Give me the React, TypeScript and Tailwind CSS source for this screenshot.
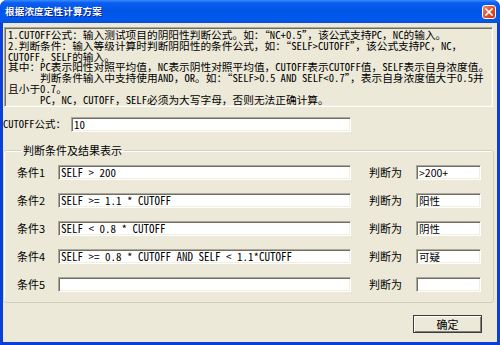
import React from "react";

type ICondRow = {
    label: string;
    expr: string;
    result: string;
};

const rows: ICondRow[] = [
    {label: "条件1", expr: "SELF > 200", result: ">200+"},
    {label: "条件2", expr: "SELF >= 1.1 * CUTOFF", result: "阳性"},
    {label: "条件3", expr: "SELF < 0.8 * CUTOFF", result: "阴性"},
    {label: "条件4", expr: "SELF >= 0.8 * CUTOFF AND SELF < 1.1*CUTOFF", result: "可疑"},
    {label: "条件5", expr: "", result: ""},
];

const helpLines = [
    "1.CUTOFF公式：输入测试项目的阴阳性判断公式。如：“NC+0.5”，该公式支持PC，NC的输入。",
    "2.判断条件：输入等级计算时判断阴阳性的条件公式，如：“SELF>CUTOFF”，该公式支持PC，NC，",
    "CUTOFF，SELF的输入。",
    "其中：PC表示阳性对照平均值，NC表示阴性对照平均值，CUTOFF表示CUTOFF值，SELF表示自身浓度值。",
    "      判断条件输入中支持使用AND，OR。如：“SELF>0.5 AND SELF<0.7”，表示自身浓度值大于0.5并",
    "且小于0.7。",
    "      PC，NC，CUTOFF，SELF必须为大写字母，否则无法正确计算。",
];

// sunken XP classic edit border
const sunken =
    "border border-[#ACA899] border-b-white border-r-white shadow-[inset_1px_1px_0_#716F64,inset_-1px_-1px_0_#F1EFE2]";

// ascii runs get half width glyphs, like SimSun; CJK punctuation stays full width
const SimText: React.FC<{ text: string }> = ({text}) => {
    const parts = text.split(/([\x20-\x7E]+)/).filter((p) => p.length > 0);
    return (
        <>
            {parts.map((p, i) =>
                /^[\x20-\x7E]+$/.test(p) ? (
                    <span key={i} className="[font-feature-settings:'hwid']">{p}</span>
                ) : (
                    <span key={i}>{p}</span>
                )
            )}
        </>
    );
};

const App: React.FC = () => {
    return (
        <div className="w-[500px] h-[345px] flex flex-col bg-[#0B3FD9] rounded-t-[7px] overflow-hidden [font-family:'Noto_Sans_CJK_SC',sans-serif] text-black">
            {/* title bar */}
            <div className="h-[23px] shrink-0 flex items-center justify-between pl-[5px] pr-[4px] bg-[linear-gradient(180deg,#3A8CFF_0%,#0A5FF0_12%,#0055E5_45%,#0059EE_80%,#0A4FD6_100%)]">
                <span className="text-white text-[9.5px] font-bold leading-none tracking-[0.2px] [text-shadow:1px_1px_0_#0A1E8C]">
                    根据浓度定性计算方案
                </span>
                <div className="w-[14px] h-[14px] rounded-[3px] border border-white bg-[linear-gradient(135deg,#F08C6C_0%,#E0502C_50%,#C83A14_100%)] flex items-center justify-center">
                    <svg width="8" height="8" viewBox="0 0 8 8">
                        <path d="M1 1L7 7M7 1L1 7" stroke="white" strokeWidth="1.6" strokeLinecap="square"/>
                    </svg>
                </div>
            </div>

            {/* body */}
            <div className="flex-1 mx-[3px] mb-[3px] bg-[#ECE9D8] flex flex-col">
                <div className={`mt-[4px] ml-[1px] w-[489px] h-[80px] pl-[3px] pt-[2px] overflow-hidden ${sunken}`}>
                    {helpLines.map((line, i) => (
                        <div key={i} className="whitespace-pre text-[10.7px] leading-[10.75px]">
                            <SimText text={line}/>
                        </div>
                    ))}
                </div>

                <div className="mt-[10px] flex items-center h-[15px]">
                    <span className="w-[68px] text-[10.5px] leading-none whitespace-pre">
                        <SimText text="CUTOFF公式："/>
                    </span>
                    <input readOnly defaultValue="10"
                           className={`w-[280px] h-[15px] px-[2px] bg-white text-[11px] outline-none [font-feature-settings:'hwid'] ${sunken}`}/>
                </div>

                <fieldset
                    className="mt-[12px] w-[491px] h-[159px] border border-[#D0D0BF] rounded-[3px] shadow-[inset_1px_1px_0_white] pl-[13px] pt-[9px]">
                    <legend className="ml-[4px] px-[2px] text-[11px] leading-[12px]">判断条件及结果表示</legend>
                    <div className="flex flex-col gap-[13px]">
                        {rows.map((r) => (
                            <div key={r.label} className="flex items-center h-[15px]">
                                <span className="w-[41px] text-[11px] leading-none">{r.label}</span>
                                <input readOnly defaultValue={r.expr}
                                       className={`w-[293px] h-[15px] px-[2px] bg-white text-[11px] outline-none [font-feature-settings:'hwid'] ${sunken}`}/>
                                <span className="ml-[18px] w-[47px] text-[11px] leading-none">判断为</span>
                                <input readOnly defaultValue={r.result}
                                       className={`w-[65px] h-[15px] px-[2px] bg-white text-[10.5px] outline-none ${sunken}`}/>
                            </div>
                        ))}
                    </div>
                </fieldset>

                <div className="mt-[12px] flex justify-end pr-[15px]">
                    <button type="button"
                            className="w-[69px] h-[18px] border border-[#3C3C3C] bg-[#ECE9D8] shadow-[inset_1px_1px_0_white,inset_-1px_-1px_0_#808080] text-[11px] leading-none">
                        确定
                    </button>
                </div>
            </div>
        </div>
    );
};

export default App;
